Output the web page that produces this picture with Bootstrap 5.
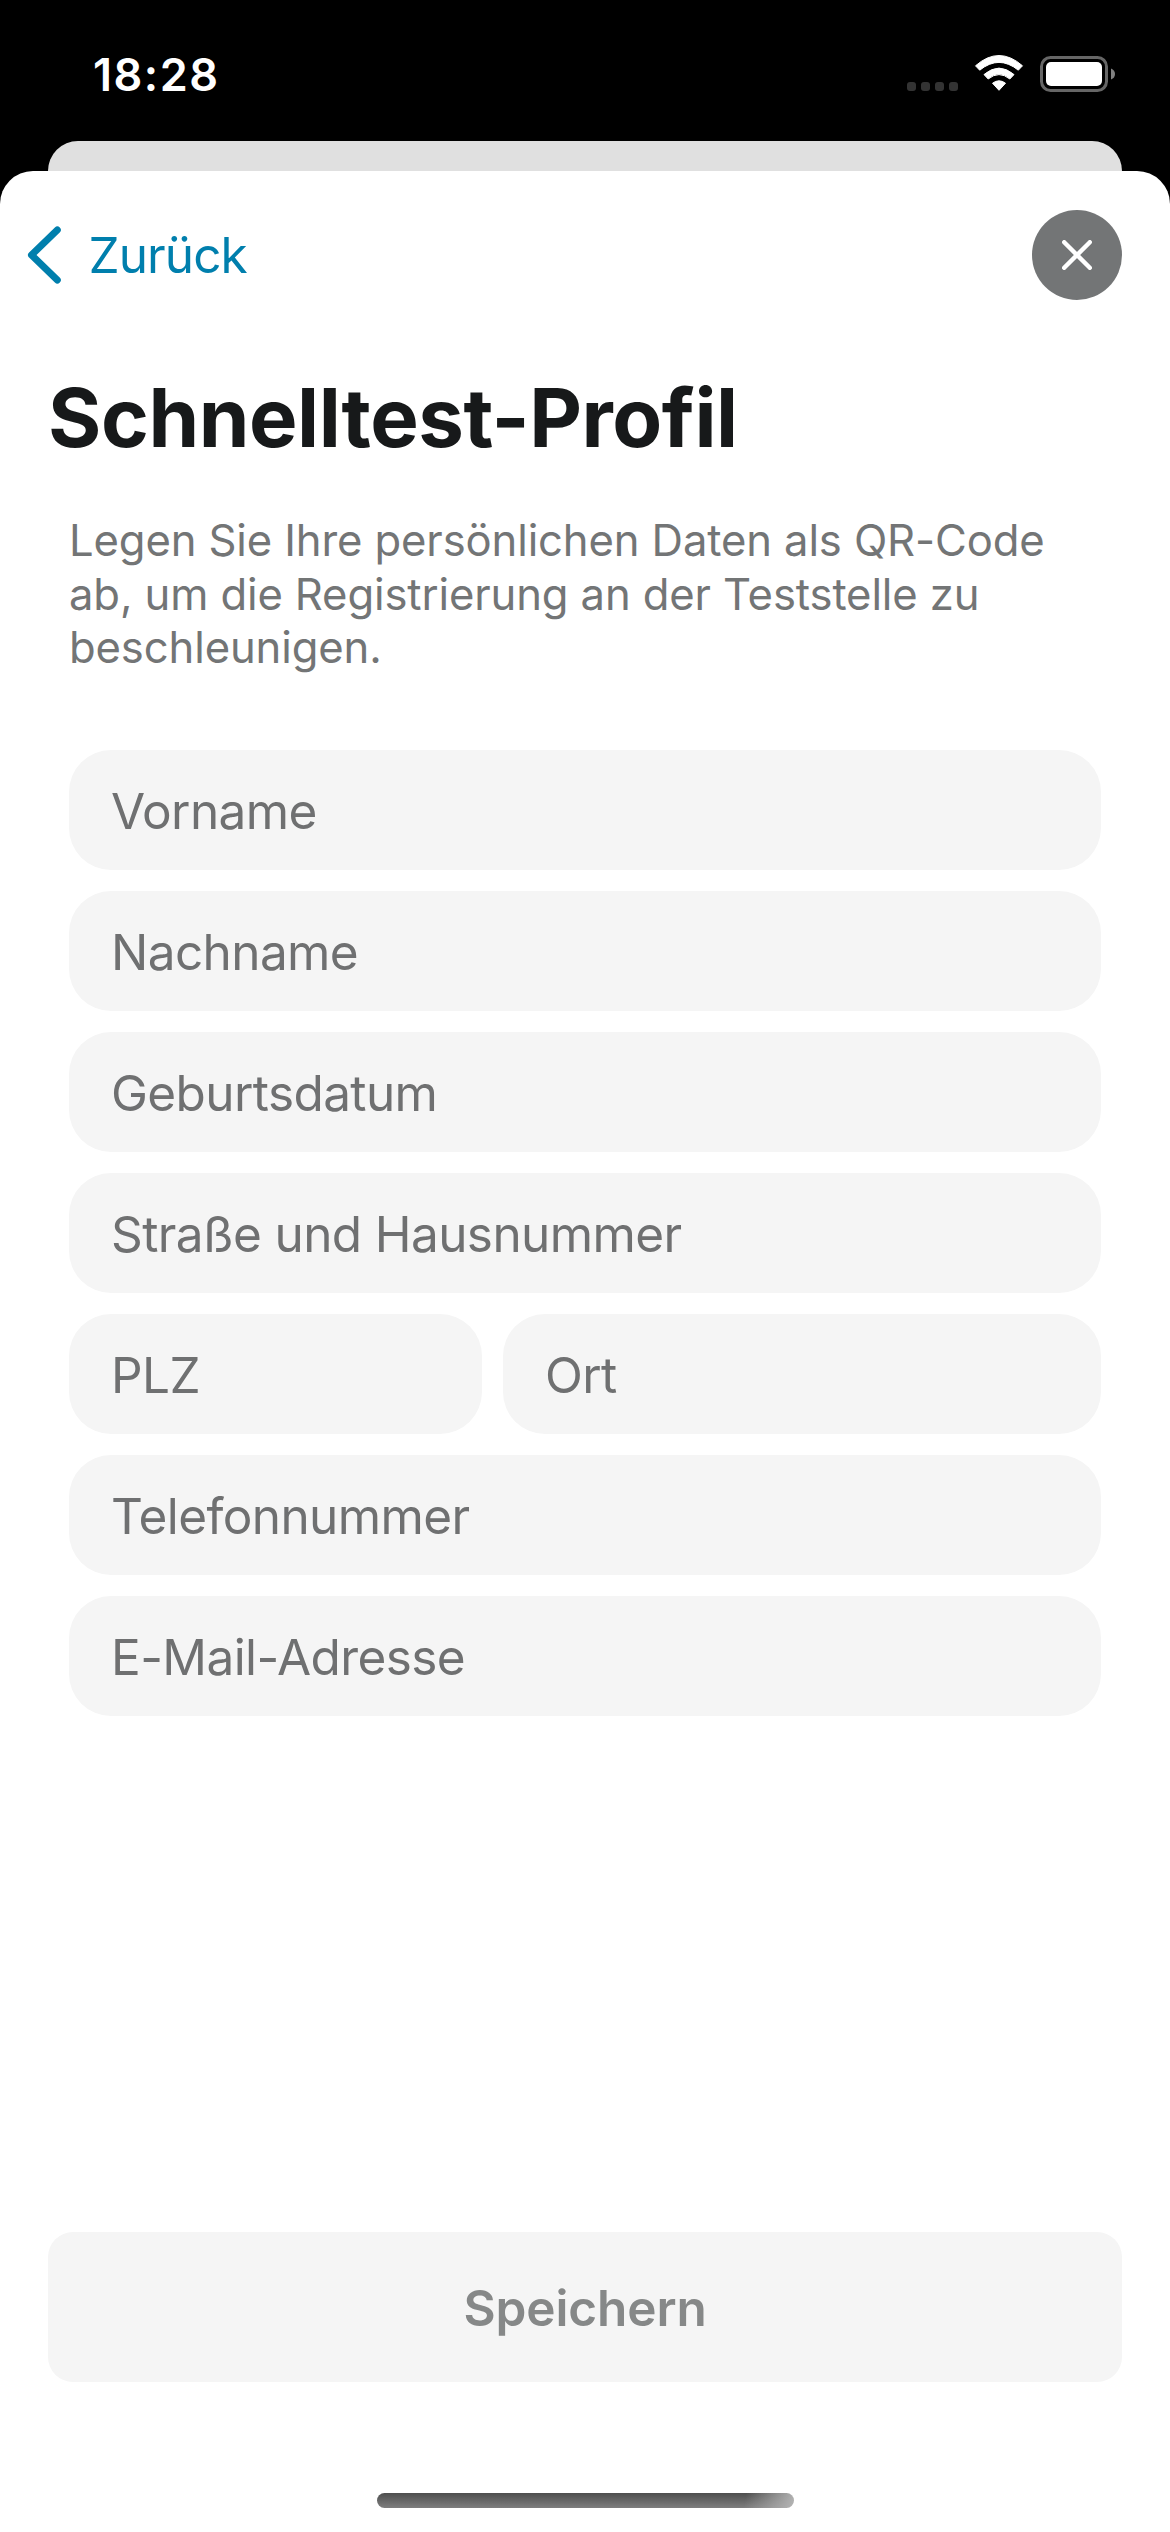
<!DOCTYPE html>
<html lang="de">
<head>
<meta charset="utf-8">
<meta name="viewport" content="width=device-width, initial-scale=1">
<title>Schnelltest-Profil</title>
<link rel="stylesheet" href="https://cdn.jsdelivr.net/npm/bootstrap@5.3.0/dist/css/bootstrap.min.css">
<style>
  body { font-family: Inter, "Liberation Sans", sans-serif; background: #000; }
  .screen { width: 1170px; height: 2532px; }
  .statusbar { height: 141px; padding: 0 55px 0 93px; }
  .clock { font-size: 45px; font-weight: 600; line-height: 54px; margin-top: 48px; letter-spacing: 1.5px; }
  .status-icons { margin-top: 53px; }
  .sheet-behind { height: 30px; margin: 0 48px; background: #e0e0e0; border-radius: 30px 30px 0 0; }
  .sheet { border-radius: 33px 33px 0 0; }
  .topbar { padding: 39px 48px 0 27px; height: 129px; }
  .back-link { color: #007fad; font-size: 49.5px; line-height: 60px; letter-spacing: -.9px; gap: 25.5px; }
  .close-btn { width: 90px; height: 90px; background: #737576; }
  .page-title { font-size: 81.5px; font-weight: 700; line-height: 100px; color: #17191a; margin: 68px 0 0 48px; letter-spacing: -.45px; }
  .intro { font-size: 43.6px; line-height: 53.7px; letter-spacing: -.12px; color: #737576; margin: 46px 69px 0 69px; }
  .profile-form { gap: 21px; margin: 74.9px 69px 0; }
  .field-pair { gap: 21px; }
  .field { height: 120px; border-radius: 42px; background: #f5f5f5; padding: 2px 42px 0; font-size: 49.5px; line-height: 60px; letter-spacing: -.6px; }
  .field::placeholder { color: #6f7071; opacity: 1; }
  .field-zip { width: 413px; flex: none; }
  .save-btn { height: 150px; margin: 0 48px; padding: 2px 0 0; border-radius: 25px; font-size: 49.5px; font-weight: 600; letter-spacing: -.1px; --bs-btn-disabled-bg: #f5f5f5; --bs-btn-disabled-color: #868888; --bs-btn-disabled-opacity: 1; }
  .home-bar { width: 417px; height: 15px; border-radius: 7.5px; margin: 111px 0 24px 377px;
    background: linear-gradient(100deg, transparent 88%, #b4b4b4 100%), linear-gradient(#4e4e4e, #7e7e7e); }
</style>
</head>
<body>
<div class="screen d-flex flex-column overflow-hidden">
  <header class="statusbar d-flex justify-content-between align-items-start text-white">
    <span class="clock">18:28</span>
    <svg class="status-icons" width="210" height="42" viewBox="905 53 210 42">
      <g fill="#333">
        <rect x="907" y="82" width="9" height="9" rx="3"/><rect x="921" y="82" width="9" height="9" rx="3"/>
        <rect x="935" y="82" width="9" height="9" rx="3"/><rect x="949" y="82" width="9" height="9" rx="3"/>
      </g>
      <g fill="#fff" stroke="#fff" stroke-width="1" stroke-linejoin="round">
        <path d="M975.5 65.8Q999 45.2 1022.5 65.8L1018.3 70.2Q999 54.600 979.7 70.2Z"/>
        <path d="M984 74.600Q999 61.600 1014 74.600L1009.800 79Q999 70.200 988.200 79Z"/>
        <path d="M992.500 83.200Q999 78.400 1005.500 83.200L999 90.300Z"/>
      </g>
      <rect x="1041.500" y="57.500" width="65" height="33" rx="9" fill="none" stroke="#666" stroke-width="3"/>
      <rect x="1046" y="62" width="56" height="24" rx="5" fill="#fff"/>
      <path d="M1111 68.500Q1115 70 1115 74T1111 79.500Z" fill="#808080"/>
    </svg>
  </header>
  <div class="sheet-behind"></div>
  <main class="sheet bg-white flex-grow-1 d-flex flex-column">
    <nav class="topbar d-flex justify-content-between align-items-center">
      <a class="back-link d-flex align-items-center text-decoration-none" href="#">
        <svg width="36" height="58" viewBox="0 0 36 58" fill="none" stroke="currentColor" stroke-width="7" stroke-linecap="round" stroke-linejoin="round"><path d="M30.300 4L4.500 29L30.300 54"/></svg>
        <span>Zurück</span>
      </a>
      <button class="close-btn btn rounded-circle border-0 p-0 d-flex align-items-center justify-content-center" aria-label="Schließen">
        <svg width="30" height="30" viewBox="0 0 30 30" stroke="#fff" stroke-width="4.400" stroke-linecap="round"><path d="M2.200 2.200L27.800 27.800M27.800 2.200L2.200 27.800"/></svg>
      </button>
    </nav>
    <h1 class="page-title">Schnelltest-Profil</h1>
    <p class="intro">Legen Sie Ihre persönlichen Daten als QR-Code<br>ab, um die Registrierung an der Teststelle zu<br>beschleunigen.</p>
    <form class="profile-form d-flex flex-column">
      <input class="form-control field border-0" type="text" placeholder="Vorname">
      <input class="form-control field border-0" type="text" placeholder="Nachname">
      <input class="form-control field border-0" type="text" placeholder="Geburtsdatum">
      <input class="form-control field border-0" type="text" placeholder="Straße und Hausnummer">
      <div class="field-pair d-flex">
        <input class="form-control field field-zip border-0" type="text" placeholder="PLZ">
        <input class="form-control field border-0" type="text" placeholder="Ort">
      </div>
      <input class="form-control field border-0" type="tel" placeholder="Telefonnummer">
      <input class="form-control field border-0" type="email" placeholder="E-Mail-Adresse">
    </form>
    <button class="save-btn btn border-0 mt-auto" disabled>Speichern</button>
    <div class="home-bar"></div>
  </main>
</div>
<script src="https://cdn.jsdelivr.net/npm/bootstrap@5.3.0/dist/js/bootstrap.bundle.min.js"></script>
</body>
</html>
